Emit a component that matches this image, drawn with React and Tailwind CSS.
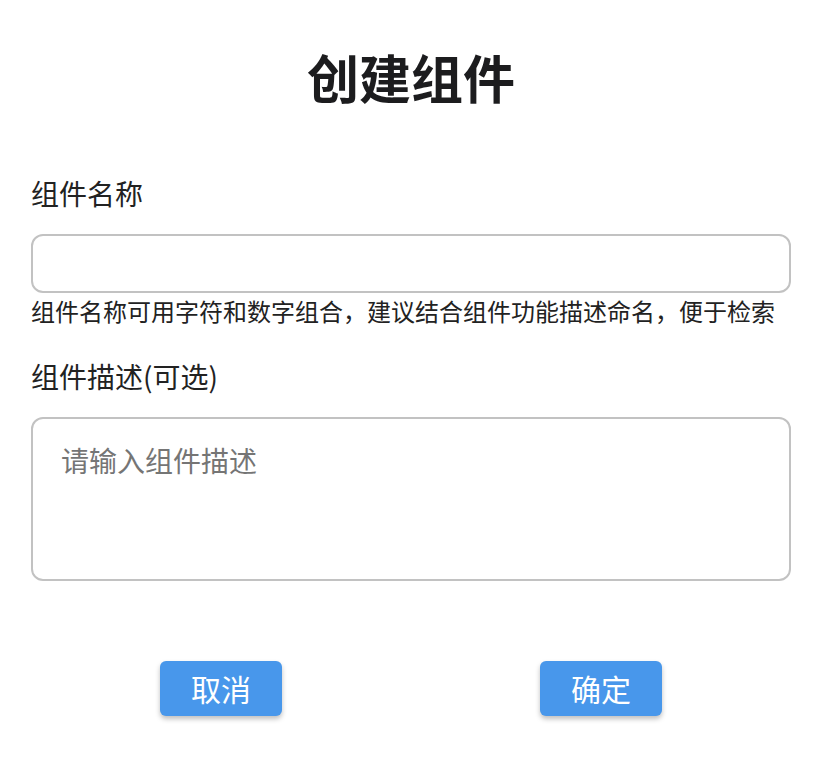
import React from "react";

function App() {
    const [name, setName] = React.useState('');
    const [desc, setDesc] = React.useState('');

    return (
        <div className="w-full min-h-screen bg-white font-['Noto_Sans_CJK_SC','Noto_Sans',sans-serif] text-[#1f1f1f]">
            <div className="flex flex-col px-[31px] pt-[51px]">
                <h1 className="text-center text-[52px] leading-none font-bold text-[#1c1c1e]">创建组件</h1>

                <label htmlFor="name" className="mt-[76px] text-[28px] leading-none text-[#222]">组件名称</label>
                <input
                    id="name"
                    type="text"
                    value={name}
                    onChange={(e) => setName(e.target.value)}
                    className="mt-[27px] h-[59px] w-full rounded-[12px] border-2 border-[#c2c2c2] px-[28px] text-[28px] outline-none"
                />
                <p className="mt-[6px] text-[24px] leading-none text-[#222] whitespace-nowrap">
                    组件名称可用字符和数字组合，建议结合组件功能描述命名，便于检索
                </p>

                <label htmlFor="desc" className="mt-[39px] text-[28px] leading-none text-[#222]">组件描述(可选)</label>
                <textarea
                    id="desc"
                    value={desc}
                    onChange={(e) => setDesc(e.target.value)}
                    placeholder="请输入组件描述"
                    className="mt-[27px] h-[164px] w-full resize-none rounded-[12px] border-2 border-[#c2c2c2] px-[28px] pt-[24px] text-[28px] leading-tight outline-none placeholder:text-[#757575]"
                ></textarea>

                <div className="mt-[80px] flex justify-around">
                    <button className="h-[55px] w-[122px] rounded-[6px] bg-[#4897eb] text-[30px] text-white shadow-[0_3px_5px_rgba(0,0,0,0.25)]">取消</button>
                    <button className="h-[55px] w-[122px] rounded-[6px] bg-[#4897eb] text-[30px] text-white shadow-[0_3px_5px_rgba(0,0,0,0.25)]">确定</button>
                </div>
            </div>
        </div>
    );
}

export default App;
